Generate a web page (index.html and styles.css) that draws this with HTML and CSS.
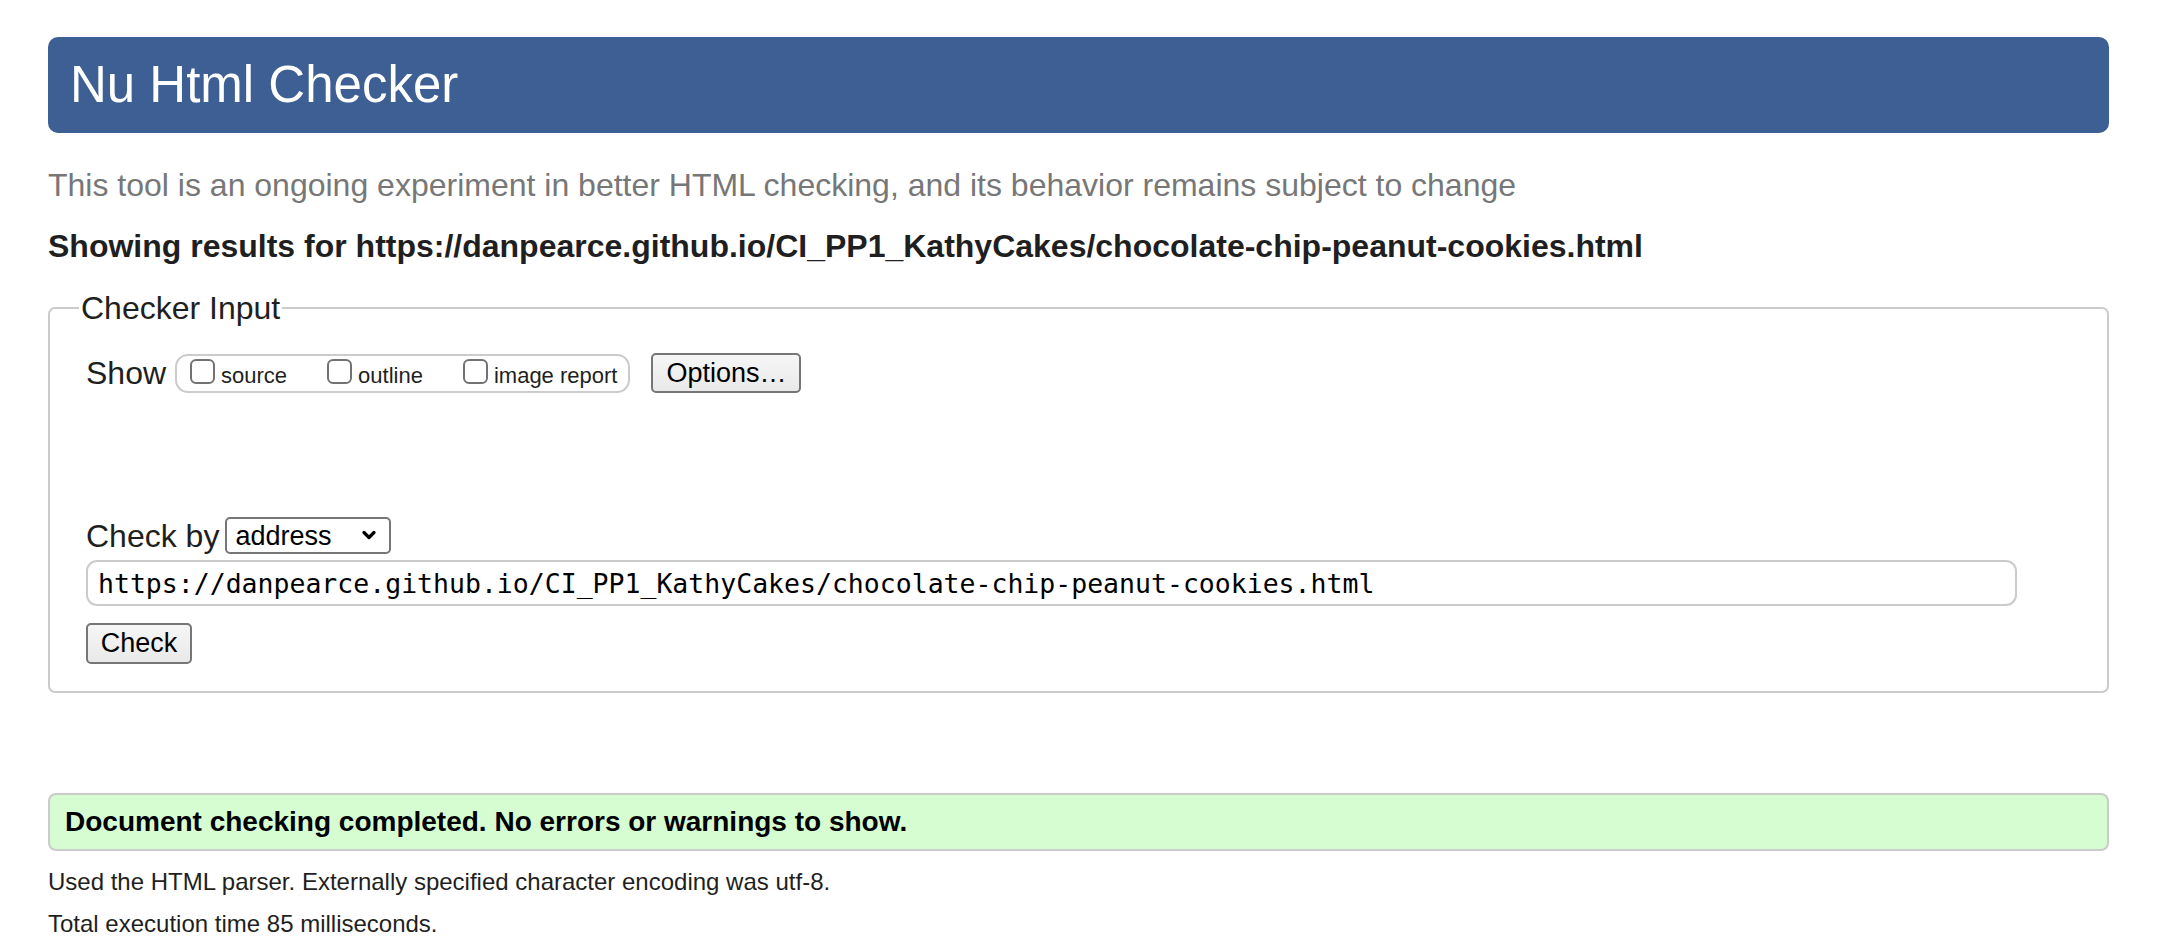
FILE: index.html
```html
<!DOCTYPE html>
<html lang="en">
<head>
<meta charset="utf-8">
<title>Nu Html Checker</title>
<link rel="stylesheet" href="styles.css">
</head>
<body>
<header class="banner"><h1 class="title">Nu Html Checker</h1></header>
<p class="intro">This tool is an ongoing experiment in better HTML checking, and its behavior remains subject to change</p>
<h2 class="results-for">Showing results for https://danpearce.github.io/CI_PP1_KathyCakes/chocolate-chip-peanut-cookies.html</h2>
<form class="checker-form">
  <fieldset class="checker-input">
    <legend class="legend">Checker Input</legend>
    <div class="show-row">
      <span class="row-label">Show</span>
      <div class="show-group">
        <label class="opt"><input type="checkbox" class="cb"><span>source</span></label>
        <label class="opt"><input type="checkbox" class="cb"><span>outline</span></label>
        <label class="opt"><input type="checkbox" class="cb"><span>image report</span></label>
      </div>
      <button type="button" class="btn btn-options">Options…</button>
    </div>
    <div class="checkby-row">
      <span class="row-label">Check by</span>
      <span class="select-wrap">
        <select class="select"><option>address</option></select>
        <svg class="chev" width="16" height="12" viewBox="0 0 16 12"><path d="M3 3.5 L8 8.5 L13 3.5" fill="none" stroke="#000" stroke-width="3.2" stroke-linecap="round" stroke-linejoin="round"/></svg>
      </span>
    </div>
    <div class="url-row">
      <input class="url" type="text" value="https://danpearce.github.io/CI_PP1_KathyCakes/chocolate-chip-peanut-cookies.html">
    </div>
    <div class="submit-row">
      <button type="button" class="btn btn-check">Check</button>
    </div>
  </fieldset>
</form>
<p class="success">Document checking completed. No errors or warnings to show.</p>
<p class="details">Used the HTML parser. Externally specified character encoding was utf-8.</p>
<p class="details">Total execution time 85 milliseconds.</p>
</body>
</html>
```
FILE: styles.css
```css
html { background: #fff; }
body {
  margin: 0;
  padding: 37px 57px 0 48px;
  font-family: "Liberation Sans", Arial, Helvetica, sans-serif;
  color: #1f1f21;
}
.banner {
  height: 96px;
  background: #3e5f93;
  border-radius: 10px;
  display: flex;
  align-items: center;
  padding-left: 22px;
}
.title {
  margin: 0;
  font-size: 51px;
  font-weight: normal;
  color: #fff;
  line-height: 1;
  padding-bottom: 2px;
}
.intro {
  margin: 33px 0 0;
  font-size: 32px;
  line-height: 38px;
  color: #777;
}
.results-for {
  margin: 23px 0 0;
  font-size: 32px;
  line-height: 38px;
  font-weight: bold;
  color: #1f1f21;
}
.checker-form { margin: 25px 0 0; }
.checker-input {
  margin: 0;
  border: 2px solid #cbcbcb;
  border-radius: 7px;
  padding: 27px 36px 27px 36px;
}
.legend {
  font-size: 32px;
  line-height: 36px;
  padding: 0 2px;
  margin-left: -7px;
}
.show-row {
  display: flex;
  align-items: center;
  height: 40px;
}
.row-label {
  font-size: 32px;
  line-height: 38px;
}
.show-group {
  margin-left: 9px;
  height: 39px;
  box-sizing: border-box;
  border: 2px solid #cbcbcb;
  border-radius: 13px;
  display: flex;
  align-items: center;
  padding: 0 11px 0 13px;
  gap: 40px;
}
.opt {
  display: flex;
  align-items: center;
  gap: 6px;
  font-size: 22px;
}
.opt span { padding-top: 6px; }
.cb {
  appearance: none;
  -webkit-appearance: none;
  margin: 0;
  width: 25px;
  height: 25px;
  box-sizing: border-box;
  border: 2px solid #727272;
  border-radius: 6px;
  background: #fff;
  margin-top: -4px;
}
.btn {
  font-family: "Liberation Sans", Arial, Helvetica, sans-serif;
  font-size: 27px;
  color: #000;
  background: linear-gradient(#f6f6f6, #e9e9e9);
  border: 2px solid #767676;
  border-radius: 5px;
  box-sizing: border-box;
  padding: 0;
}
.btn-options {
  margin-left: 21px;
  width: 150px;
  height: 40px;
}
.checkby-row {
  display: flex;
  align-items: center;
  margin-top: 124px;
  height: 37px;
}
.select-wrap {
  position: relative;
  margin-left: 6px;
  display: inline-flex;
}
.select {
  appearance: none;
  -webkit-appearance: none;
  width: 166px;
  height: 37px;
  box-sizing: border-box;
  border: 2px solid #767676;
  border-radius: 5px;
  background: #fff;
  font-family: "Liberation Sans", Arial, Helvetica, sans-serif;
  font-size: 27px;
  color: #000;
  padding: 0 0 0 8px;
}
.chev {
  position: absolute;
  right: 14px;
  top: 12px;
  pointer-events: none;
}
.url-row { margin-top: 6px; }
.url {
  width: 1931px;
  height: 46px;
  box-sizing: border-box;
  border: 2px solid #cbcbcb;
  border-radius: 11px;
  padding: 0 10px;
  font-family: "DejaVu Sans Mono", "Liberation Mono", monospace;
  font-size: 26.5px;
  color: #000;
  background: #fff;
  margin: 0;
}
.submit-row { margin-top: 17px; }
.btn-check {
  width: 106px;
  height: 41px;
}
.success {
  margin: 100px 0 0;
  height: 58px;
  box-sizing: border-box;
  background: #d6fcd1;
  border: 2px solid #cbcbcb;
  border-radius: 8px;
  font-size: 28px;
  font-weight: bold;
  color: #000;
  display: flex;
  align-items: center;
  padding: 0 15px;
}
.details {
  margin: 16px 0 0;
  font-size: 24px;
  line-height: 30px;
  color: #1f1f21;
}
.details + .details { margin-top: 12px; }
```
